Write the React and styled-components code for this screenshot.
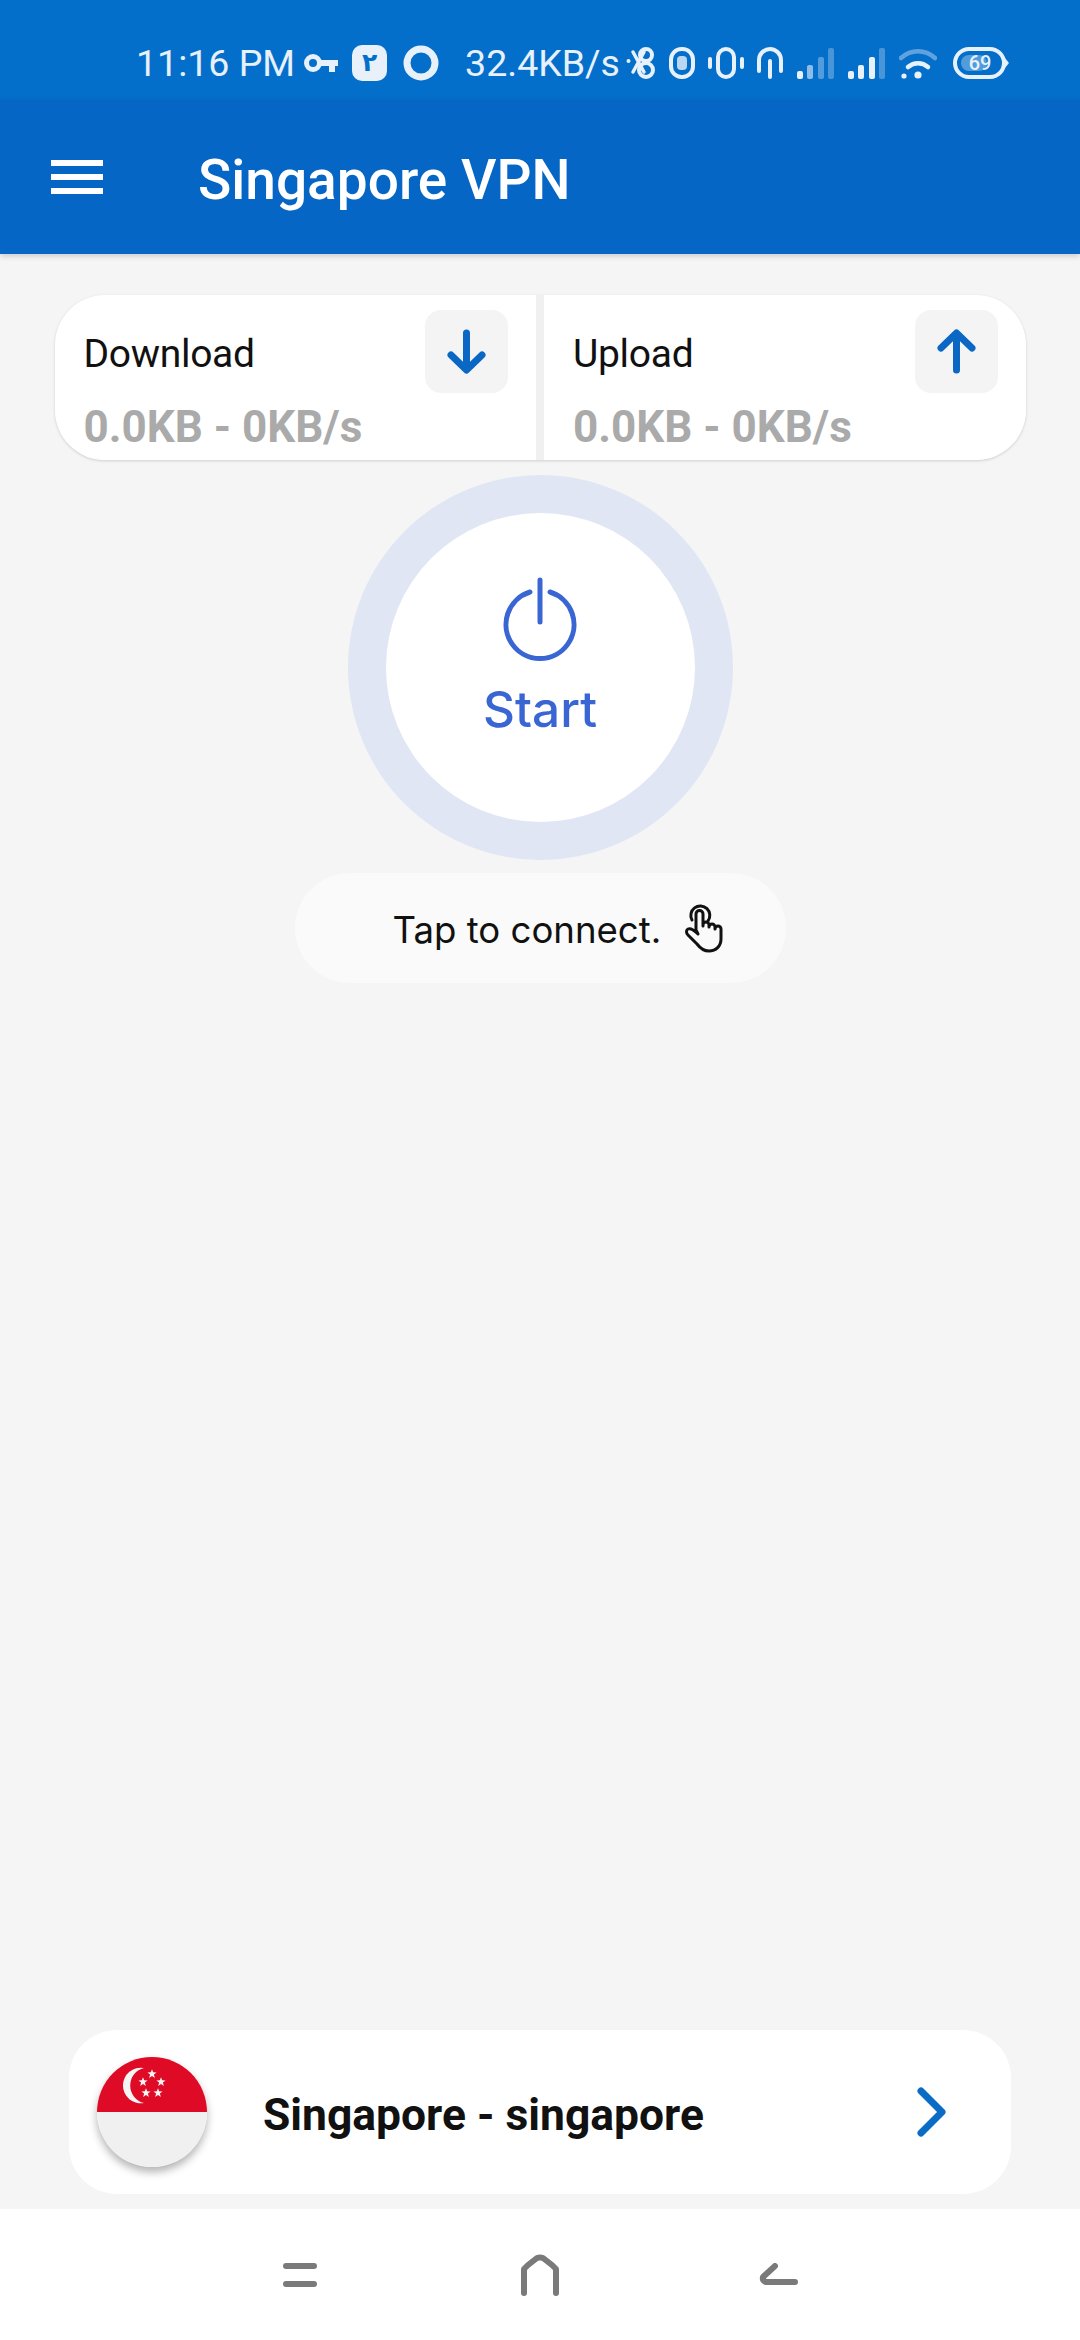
import React from "react";
import styled, { createGlobalStyle } from "styled-components";

const Global = createGlobalStyle`
  html, body { margin: 0; padding: 0; background: #f5f5f5; }
  * { box-sizing: border-box; }
  body { font-family: Roboto, "Liberation Sans", sans-serif; }
`;

const Page = styled.div`
  width: 1080px;
  height: 2340px;
  display: flex;
  flex-direction: column;
  background: #f5f5f5;
  overflow: hidden;
`;

const StatusBar = styled.div`
  height: 100px;
  flex: none;
  display: flex;
  align-items: center;
  padding: 25px 0 0 136px;
  background: #046fcb;
  color: #e8f1fa;
  font-size: 37.5px;
  line-height: 44px;
`;
const StatusText = styled.span`
  margin-left: ${(p) => p.$ml || 0}px;
  white-space: nowrap;
`;
const StatusIcon = styled.svg`
  flex: none;
  display: block;
  margin-left: ${(p) => p.$ml || 0}px;
`;
const SimBadge = styled.span`
  flex: none;
  width: 35px;
  height: 36px;
  margin-left: 14px;
  border-radius: 10px;
  background: #e8f1fa;
  color: #046fcb;
  font: 700 25px/36px "DejaVu Sans", sans-serif;
  text-align: center;
`;

const AppBar = styled.header`
  height: 154px;
  flex: none;
  display: flex;
  align-items: center;
  gap: 95px;
  padding-left: 51px;
  background: #0566c5;
  box-shadow: 0 2px 6px rgba(0, 0, 0, 0.18);
  position: relative;
`;
const Title = styled.h1`
  margin: 0;
  color: #fff;
  font-size: 55px;
  line-height: 60px;
  font-weight: 500;
  padding-top: 6px;
`;

const Main = styled.main`
  flex: 1;
  display: flex;
  flex-direction: column;
  align-items: center;
  padding-top: 41px;
`;

const StatsCard = styled.section`
  width: 971px;
  height: 165px;
  display: flex;
  gap: 8px;
  border-radius: 50px;
  overflow: hidden;
  background: #f0f0f0;
  box-shadow: 0 1px 3px rgba(0, 0, 0, 0.16);
  flex: none;
`;
const StatCell = styled.div`
  flex: 1;
  display: grid;
  grid-template-columns: 1fr 83px;
  grid-template-rows: 83px auto;
  align-items: center;
  padding: 15px 28px 0 29px;
  background: #fff;
`;
const StatLabel = styled.div`
  font-size: 39px;
  letter-spacing: -0.3px;
  padding-top: 5px;
  color: #111;
`;
const ArrowBox = styled.div`
  width: 83px;
  height: 83px;
  border-radius: 16px;
  background: #f4f4f4;
  display: flex;
  align-items: center;
  justify-content: center;
`;
const StatValue = styled.div`
  grid-column: 1 / 3;
  font-size: 44px;
  line-height: 50px;
  font-weight: 700;
  color: #aaaaaa;
`;

const Ring = styled.div`
  width: 385px;
  height: 385px;
  margin-top: 15px;
  flex: none;
  border-radius: 50%;
  background: #e0e6f3;
  display: flex;
  align-items: center;
  justify-content: center;
`;
const StartButton = styled.div`
  width: 309px;
  height: 309px;
  border-radius: 50%;
  background: #fff;
  display: flex;
  flex-direction: column;
  align-items: center;
  padding-top: 64px;
  color: #3a66d4;
`;
const StartLabel = styled.div`
  margin-top: 19px;
  font: 500 49.5px/58px Inter, sans-serif;
`;

const HintPill = styled.div`
  width: 491px;
  height: 110px;
  margin-top: 13px;
  flex: none;
  border-radius: 55px;
  background: #fafafa;
  display: flex;
  align-items: center;
  gap: 24px;
  padding-left: 98px;
`;
const HintText = styled.span`
  font: 400 36.6px/46px Inter, sans-serif;
  padding-top: 4px;
  color: #111;
  white-space: nowrap;
`;

const ServerCard = styled.section`
  width: 942px;
  height: 164px;
  margin-top: auto;
  margin-bottom: 15px;
  flex: none;
  border-radius: 48px;
  background: #fff;
  display: flex;
  align-items: center;
  padding: 0 64px 0 28px;
`;
const FlagWrap = styled.div`
  width: 110px;
  height: 110px;
  flex: none;
  border-radius: 50%;
  box-shadow: 0 5px 9px rgba(0, 0, 0, 0.3);
`;
const ServerName = styled.div`
  flex: 1;
  margin-left: 56px;
  padding-top: 5px;
  font-size: 44.4px;
  font-weight: 700;
  color: #111;
`;

const NavBar = styled.nav`
  height: 131px;
  flex: none;
  background: #fff;
  display: flex;
  align-items: center;
  justify-content: center;
`;
const NavIcon = styled.svg`
  display: block;
  margin-left: ${(p) => p.$ml || 0}px;
`;

const Key = () => (
  <StatusIcon $ml={9} width="34" height="20" viewBox="0 0 34 20">
    <circle cx="9" cy="10" r="6.5" fill="none" stroke="#e8f1fa" strokeWidth="5" />
    <path d="M15 7h19v6h-3v6h-6v-6h-10z" fill="#e8f1fa" />
  </StatusIcon>
);
const Circle = () => (
  <StatusIcon $ml={16} width="36" height="36" viewBox="0 0 36 36">
    <circle cx="18" cy="18" r="14" fill="none" stroke="#e8f1fa" strokeWidth="7" />
  </StatusIcon>
);
const line = { fill: "none", stroke: "#e8f1fa", strokeLinecap: "round", strokeLinejoin: "round" };
const Bluetooth = () => (
  <StatusIcon $ml={6} width="30" height="32" viewBox="0 0 30 32">
    <circle cx="2.500" cy="14" r="2" fill="#e8f1fa" />
    <path d="M7 5l11 20M7 25L18 5" {...line} strokeWidth="3.500" />
    <circle cx="20" cy="8" r="6" {...line} strokeWidth="4" />
    <circle cx="20" cy="23" r="7" {...line} strokeWidth="4" />
  </StatusIcon>
);
const Zero = () => (
  <StatusIcon $ml={13} width="26" height="32" viewBox="0 0 26 32">
    <rect x="2" y="2" width="22" height="28" rx="10.500" {...line} strokeWidth="4" />
    <rect x="8" y="9" width="10" height="14" rx="4" fill="#e8f1fa" opacity=".8" />
  </StatusIcon>
);
const Vibrate = () => (
  <StatusIcon $ml={13} width="36" height="32" viewBox="0 0 36 32">
    <rect x="10" y="2" width="16" height="28" rx="8" {...line} strokeWidth="4" />
    <path d="M2 12v8M34 12v8" {...line} strokeWidth="4" />
  </StatusIcon>
);
const Arch = () => (
  <StatusIcon $ml={13} width="26" height="32" viewBox="0 0 26 32">
    <path d="M2 24V13a11 11 0 0 1 22 0v11M13 14v16" {...line} strokeWidth="4" />
  </StatusIcon>
);
const Signal = ({ ml, full }) => (
  <StatusIcon $ml={ml} width="37" height="32" viewBox="0 0 37 32">
    <rect x="0" y="24" width="6" height="8" rx="2" fill="#e8f1fa" />
    <rect x="10" y="18" width="6" height="14" rx="2" fill="#e8f1fa" opacity={full ? 1 : 0.6} />
    <rect x="21" y="10" width="6" height="22" rx="2" fill="#e8f1fa" opacity={full ? 1 : 0.35} />
    <rect x="31" y="1" width="6" height="31" rx="2" fill="#e8f1fa" opacity=".3" />
  </StatusIcon>
);
const Wifi = () => (
  <StatusIcon $ml={14} width="38" height="32" viewBox="0 0 38 32">
    <path d="M2 11C12 2 26 2 36 11" {...line} strokeWidth="4.500" opacity=".4" />
    <path d="M9 20c6-5 14-5 20 0" {...line} strokeWidth="4.500" />
    <circle cx="19" cy="28" r="3.600" fill="#e8f1fa" />
    <circle cx="5" cy="29" r="2.600" fill="#e8f1fa" />
  </StatusIcon>
);
const Battery = () => (
  <StatusIcon $ml={16} width="56" height="32" viewBox="0 0 56 32">
    <rect x="2" y="2" width="49" height="28" rx="14" fill="none" stroke="#e8f1fa" strokeWidth="4" />
    <path d="M51 11l4 5-4 5z" fill="#e8f1fa" stroke="#e8f1fa" strokeWidth="1.500" strokeLinejoin="round" />
    <rect x="8" y="8" width="26" height="16" rx="8" fill="#e8f1fa" opacity=".35" />
    <text x="27" y="23" fontFamily="Roboto, sans-serif" fontSize="20" fontWeight="500" fill="#e8f1fa" textAnchor="middle">69</text>
  </StatusIcon>
);

const Menu = () => (
  <svg width="52" height="34" viewBox="0 0 52 34" fill="#fff">
    <rect width="52" height="6" />
    <rect y="14" width="52" height="6" />
    <rect y="28" width="52" height="6" />
  </svg>
);
const ArrowDown = () => (
  <svg width="39" height="45" viewBox="0 0 39 45" fill="none" stroke="#0a67c4" strokeWidth="7" strokeLinecap="round" strokeLinejoin="round">
    <path d="M19.500 4v36M4 26l15.500 15L35 26" />
  </svg>
);
const ArrowUp = () => (
  <svg width="39" height="45" viewBox="0 0 39 45" fill="none" stroke="#0a67c4" strokeWidth="7" strokeLinecap="round" strokeLinejoin="round">
    <path d="M19.500 41V5M4 19L19.500 4 35 19" />
  </svg>
);
const Power = () => (
  <svg width="74" height="84" viewBox="0 0 74 84" fill="none" stroke="#3a66d4" strokeWidth="5" strokeLinecap="round">
    <path d="M37 3v42" />
    <path d="M27 15a34 34 0 1 0 20 0" />
  </svg>
);
const Hand = () => (
  <svg width="38" height="50" viewBox="0 0 38 50" fill="none" stroke="#111" strokeWidth="3" strokeLinecap="round" strokeLinejoin="round">
    <path d="M7 17a9.500 9.500 0 1 1 16 1" />
    <path d="M11 27V11a3.500 3.500 0 0 1 7 0v12l0-1a3 3 0 0 1 6 0v2a3 3 0 0 1 6 0v2a3 3 0 0 1 6 0v10c0 7-5 12-12 12-6 0-9-3-12-7l-9-9c-2-2-2-5 0-6 2-1 5 0 10 5z" />
  </svg>
);
const Chevron = () => (
  <svg width="30" height="50" viewBox="0 0 30 50" fill="none" stroke="#0a6cc4" strokeWidth="7" strokeLinecap="round" strokeLinejoin="round">
    <path d="M4 4l21 21L4 46" />
  </svg>
);
const star = (cx, cy, r = 4.800) => {
  const pts = [];
  for (let i = 0; i < 10; i++) {
    const a = (-90 + i * 36) * (Math.PI / 180);
    const q = i % 2 ? r * 0.42 : r;
    pts.push(`${(cx + q * Math.cos(a)).toFixed(2)},${(cy + q * Math.sin(a)).toFixed(2)}`);
  }
  return pts.join(" ");
};
const Flag = () => (
  <svg width="110" height="110" viewBox="0 0 110 110">
    <defs>
      <clipPath id="flagClip">
        <circle cx="55" cy="55" r="55" />
      </clipPath>
    </defs>
    <g clipPath="url(#flagClip)">
      <rect width="110" height="55" fill="#df0a25" />
      <rect y="55" width="110" height="55" fill="#f0f0f0" />
    </g>
    <path d="M47 11A17.800 17.800 0 1 0 47 46A18 18 0 0 1 47 11z" fill="#f4f4f4" />
    {[[55, 17], [64, 25], [46, 25], [49, 36], [61, 36]].map(([x, y]) => (
      <polygon key={x} points={star(x, y)} fill="#f4f4f4" />
    ))}
  </svg>
);
const navLine = { fill: "none", stroke: "#7a7a7a", strokeLinecap: "round", strokeLinejoin: "round", strokeWidth: 6 };
const NavRecents = () => (
  <NavIcon width="34" height="24" viewBox="0 0 34 24">
    <path d="M3 3h28M3 21h28" {...navLine} />
  </NavIcon>
);
const NavHome = () => (
  <NavIcon $ml={203} width="40" height="42" viewBox="0 0 40 42">
    <path d="M4 39V15l4-4 9-7q3-1 6 0l9 7 4 4v24" {...navLine} />
  </NavIcon>
);
const NavBack = () => (
  <NavIcon $ml={199} width="39" height="24" viewBox="0 0 39 24">
    <path d="M16 3L4 14q-1 4 3 5h29" {...navLine} />
  </NavIcon>
);

export default function App() {
  return (
    <Page>
      <Global />
      <StatusBar>
        <StatusText>11:16 PM</StatusText>
        <Key />
        <SimBadge>۲</SimBadge>
        <Circle />
        <StatusText $ml={26}>32.4KB/s</StatusText>
        <Bluetooth />
        <Zero />
        <Vibrate />
        <Arch />
        <Signal ml={14} />
        <Signal ml={14} full />
        <Wifi />
        <Battery />
      </StatusBar>
      <AppBar>
        <Menu />
        <Title>Singapore VPN</Title>
      </AppBar>
      <Main>
        <StatsCard>
          <StatCell>
            <StatLabel>Download</StatLabel>
            <ArrowBox><ArrowDown /></ArrowBox>
            <StatValue>0.0KB - 0KB/s</StatValue>
          </StatCell>
          <StatCell>
            <StatLabel>Upload</StatLabel>
            <ArrowBox><ArrowUp /></ArrowBox>
            <StatValue>0.0KB - 0KB/s</StatValue>
          </StatCell>
        </StatsCard>
        <Ring>
          <StartButton>
            <Power />
            <StartLabel>Start</StartLabel>
          </StartButton>
        </Ring>
        <HintPill>
          <HintText>Tap to connect.</HintText>
          <Hand />
        </HintPill>
        <ServerCard>
          <FlagWrap><Flag /></FlagWrap>
          <ServerName>Singapore - singapore</ServerName>
          <Chevron />
        </ServerCard>
      </Main>
      <NavBar>
        <NavRecents />
        <NavHome />
        <NavBack />
      </NavBar>
    </Page>
  );
}
